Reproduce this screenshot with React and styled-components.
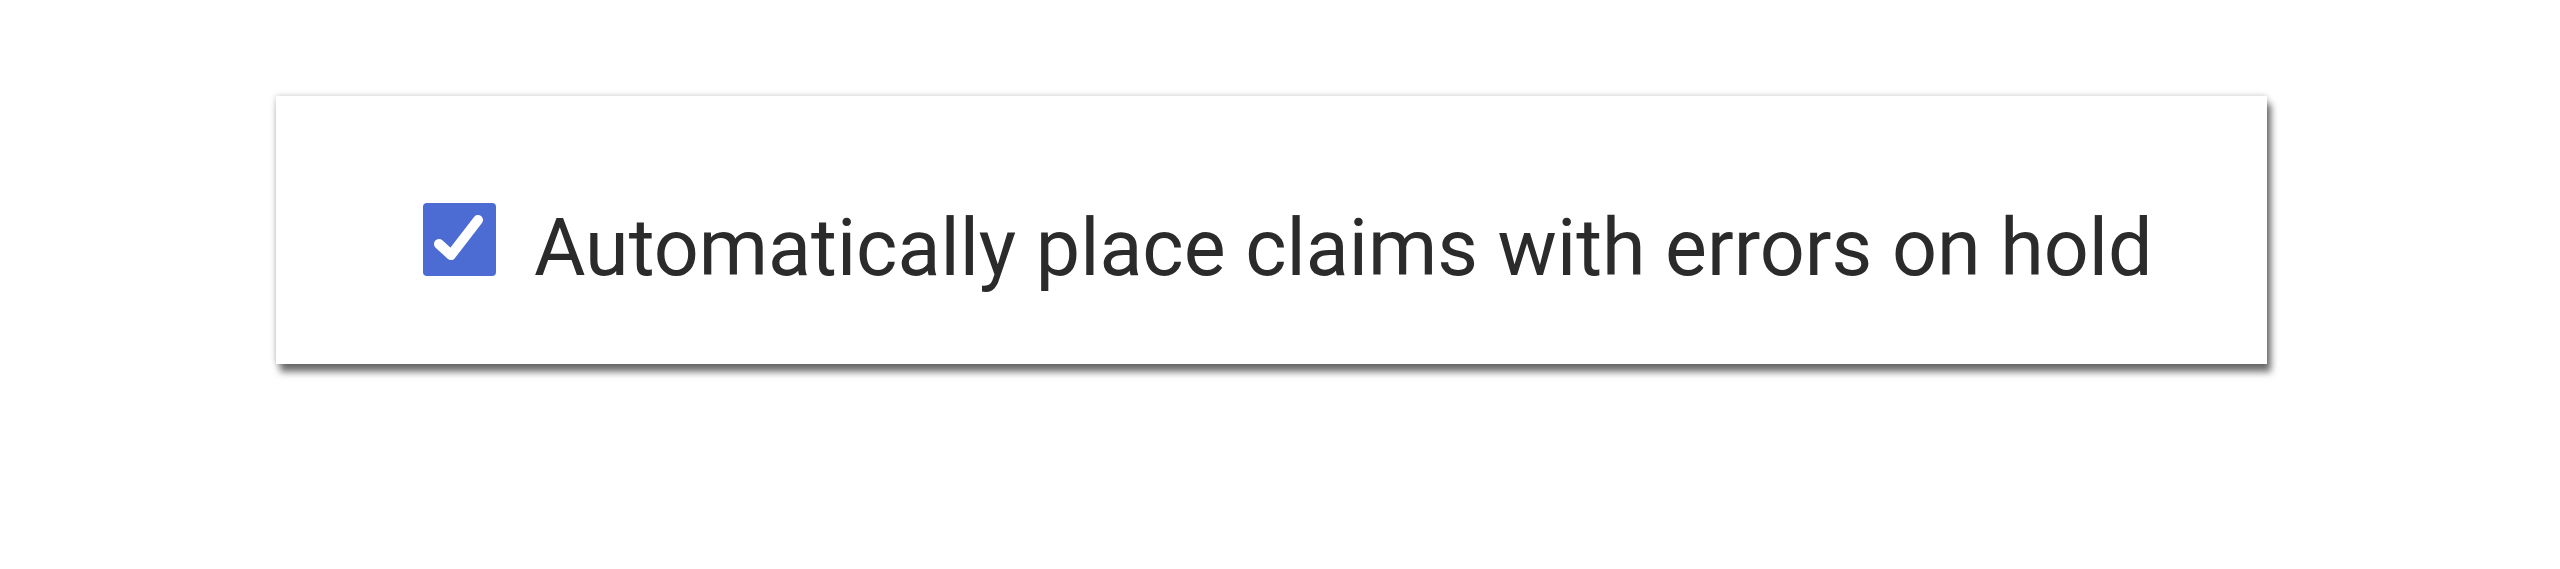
import React from "react";
import styled, { createGlobalStyle } from "styled-components";

const Global = createGlobalStyle`
  html, body {
    margin: 0;
    padding: 0;
    background: #ffffff;
  }
  body {
    font-family: Roboto, "Liberation Sans", Arial, sans-serif;
  }
`;

const Page = styled.div`
  padding: 96px 0 0 276px;
  width: 2560px;
  height: 569px;
  box-sizing: border-box;
`;

const Card = styled.div`
  width: 1991px;
  height: 268px;
  box-sizing: border-box;
  background: #ffffff;
  box-shadow: 0 0 6px rgba(0, 0, 0, 0.22), 4px 8px 7px rgba(0, 0, 0, 0.55);
  padding: 107px 0 0 147px;
`;

const Row = styled.label`
  display: flex;
  align-items: flex-start;
  gap: 38px;
  cursor: pointer;
`;

const Box = styled.span`
  flex: none;
  width: 73px;
  height: 73px;
  border-radius: 4px;
  background: ${(p) => (p.$checked ? "#4c6cd3" : "#ffffff")};
  display: flex;
  align-items: center;
  justify-content: center;
`;

const Text = styled.span`
  font-family: Roboto, "Liberation Sans", Arial, sans-serif;
  font-size: 79px;
  line-height: 79px;
  color: #2b2b2b;
  padding-top: 6px;
  white-space: nowrap;
`;

export default function App() {
  const checked = true;
  return (
    <>
      <Global />
      <Page>
        <Card>
          <Row>
            <Box $checked={checked}>
              {checked && (
                <svg width="73" height="73" viewBox="0 0 73 73">
                  <path
                    d="M16 41 L28 52 L55 17"
                    fill="none"
                    stroke="#ffffff"
                    strokeWidth="10"
                    strokeLinecap="round"
                    strokeLinejoin="round"
                  />
                </svg>
              )}
            </Box>
            <Text>Automatically place claims with errors on hold</Text>
          </Row>
        </Card>
      </Page>
    </>
  );
}
